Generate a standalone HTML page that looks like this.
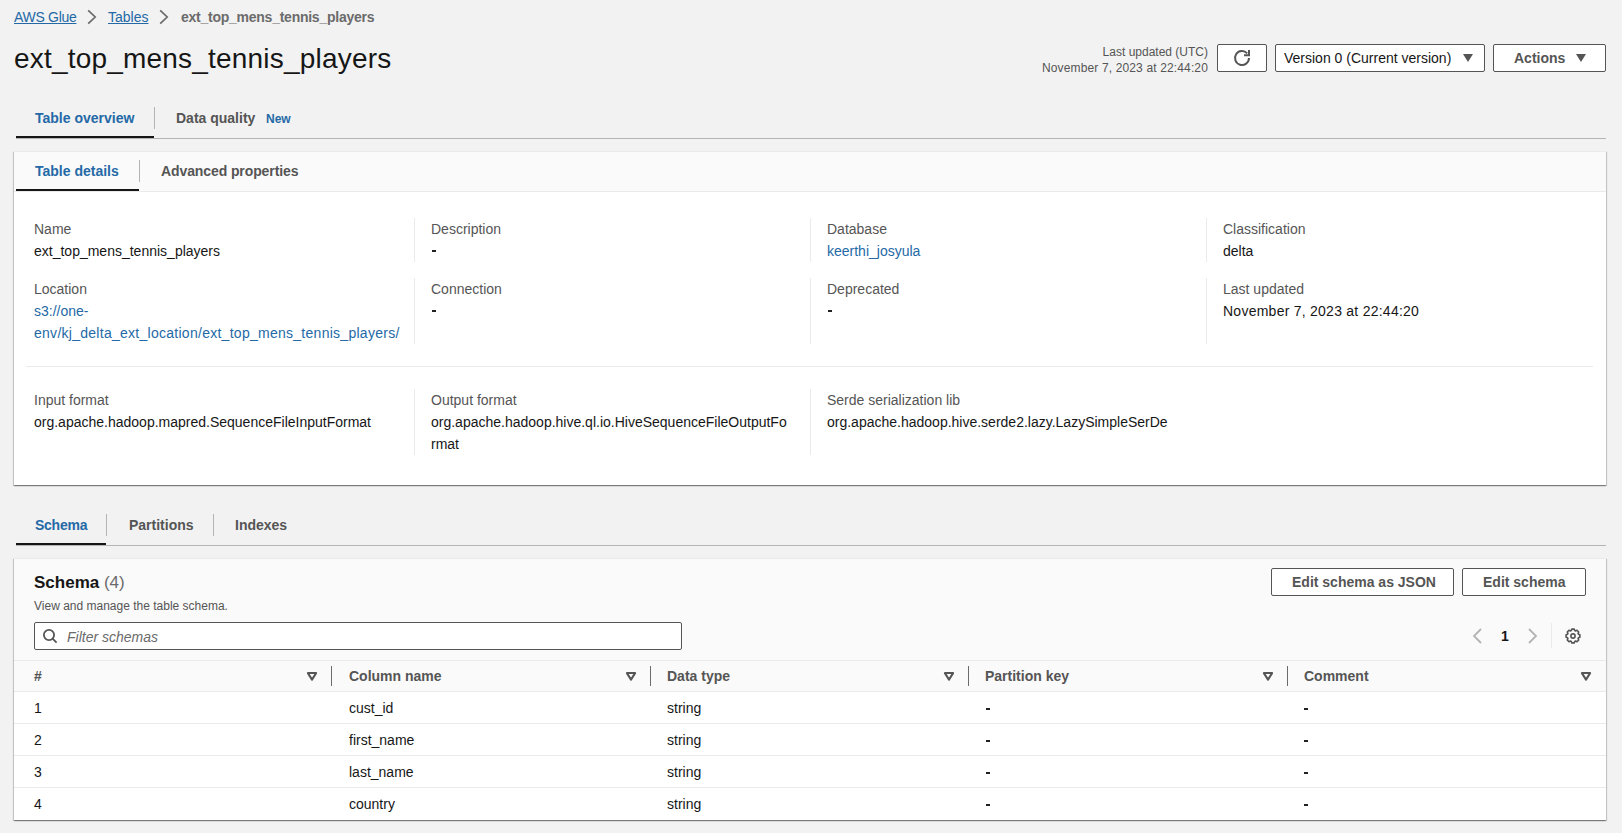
<!DOCTYPE html>
<html><head><meta charset="utf-8">
<style>
*{box-sizing:border-box;margin:0;padding:0}
html,body{width:1622px;height:833px;overflow:hidden;background:#f2f2f2;font-family:"Liberation Sans",sans-serif;color:#161616;position:relative}
.a{position:absolute;white-space:nowrap}
.t14{font-size:14px;line-height:22px}
.t12{font-size:12px;line-height:16px}
.b{font-weight:700}
.lnk{color:#2469a6}
.gray{color:#555555}
.lbl{color:#555555;font-size:14px;line-height:22px}
.val{color:#161616;font-size:14px;line-height:22px}
.vline{position:absolute;width:1px;background:#eaeaea}
.hline{position:absolute;height:1px;background:#eaeaea}
.panel{position:absolute;background:#fff;box-shadow:0 1px 1px 0 rgba(0,0,0,.3),1px 1px 1px 0 rgba(0,0,0,.15),-1px 1px 1px 0 rgba(0,0,0,.15);border-top:1px solid #eaeaea}
.btn{position:absolute;background:#fff;border:1px solid #555555;border-radius:2px}
.tabsep{position:absolute;width:1px;background:#b4b4b4}
</style></head><body>

<!-- breadcrumbs -->
<div class="a t14 lnk" style="left:14px;top:6px;text-decoration:underline;letter-spacing:-0.3px">AWS Glue</div>
<div class="a t14 lnk" style="left:108px;top:6px;text-decoration:underline">Tables</div>
<svg class="a" style="left:86px;top:9px" width="12" height="16" viewBox="0 0 12 16"><path d="M2.2 1.3L9.2 8L2.2 14.7" fill="none" stroke="#6b6b6b" stroke-width="1.7"/></svg>
<svg class="a" style="left:158px;top:9px" width="12" height="16" viewBox="0 0 12 16"><path d="M2.2 1.3L9.2 8L2.2 14.7" fill="none" stroke="#6b6b6b" stroke-width="1.7"/></svg>
<div class="a t14 b" style="left:181px;top:6px;color:#6b6b6b;letter-spacing:-0.25px">ext_top_mens_tennis_players</div>

<!-- title -->
<div class="a" style="left:14px;top:41px;font-size:28px;line-height:36px;letter-spacing:0.2px">ext_top_mens_tennis_players</div>

<!-- last updated -->
<div class="a t12 gray" style="right:414px;top:44px;text-align:right">Last updated (UTC)<br><span style="letter-spacing:0.14px">November 7, 2023 at 22:44:20</span></div>

<!-- refresh -->
<div class="btn" style="left:1217px;top:44px;width:50px;height:28px"></div>
<svg class="a" style="left:1234px;top:50px;overflow:visible" width="16" height="16" viewBox="0 0 16 16"><path d="M15 8A7 7 0 1 1 13.2 3.3" fill="none" stroke="#555555" stroke-width="2"/><path d="M10 5.2h5V0" fill="none" stroke="#555555" stroke-width="2"/></svg>

<!-- version select -->
<div class="btn" style="left:1275px;top:44px;width:210px;height:28px"></div>
<div class="a t14" style="left:1284px;top:47px">Version 0 (Current version)</div>
<svg class="a" style="left:1462px;top:53px" width="12" height="10" viewBox="0 0 12 10"><path d="M1 1h10l-5 8z" fill="#555555"/></svg>

<!-- actions -->
<div class="btn" style="left:1493px;top:44px;width:113px;height:28px"></div>
<div class="a t14 b gray" style="left:1514px;top:47px">Actions</div>
<svg class="a" style="left:1575px;top:53px" width="12" height="10" viewBox="0 0 12 10"><path d="M1 1h10l-5 8z" fill="#555555"/></svg>

<!-- top tabs -->
<div class="a t14 b lnk" style="left:35px;top:107px">Table overview</div>
<div class="tabsep" style="left:154px;top:107px;height:22px"></div>
<div class="a t14 b gray" style="left:176px;top:107px">Data quality</div>
<div class="a t12 b lnk" style="left:266px;top:111px">New</div>
<div class="a" style="left:16px;top:138px;width:1590px;height:1px;background:#b4b4b4"></div>
<div class="a" style="left:16px;top:136px;width:138px;height:2px;background:#161616"></div>


<!-- panel 1 -->
<div class="panel" style="left:14px;top:151px;width:1592px;height:334px">
  <div style="position:absolute;left:0;top:0;width:1592px;height:40px;background:#fafafa;border-bottom:1px solid #eaeaea"></div>
</div>
<div class="a t14 b lnk" style="left:35px;top:160px">Table details</div>
<div class="tabsep" style="left:139px;top:160px;height:22px"></div>
<div class="a t14 b gray" style="left:161px;top:160px;letter-spacing:-0.1px">Advanced properties</div>
<div class="a" style="left:16px;top:189px;width:123px;height:2px;background:#161616"></div>

<!-- details grid -->
<div class="a lbl" style="left:34px;top:218px">Name</div>
<div class="a val" style="left:34px;top:240px">ext_top_mens_tennis_players</div>
<div class="a lbl" style="left:34px;top:278px">Location</div>
<div class="a val" style="color:#2469a6;left:34px;top:300px">s3://one-<br><span style="letter-spacing:0.27px">env/kj_delta_ext_location/ext_top_mens_tennis_players/</span></div>

<div class="vline" style="left:414px;top:218px;height:44px"></div>
<div class="vline" style="left:414px;top:278px;height:66px"></div>
<div class="a lbl" style="left:431px;top:218px">Description</div>
<div class="a" style="left:432px;top:250px;width:4px;height:2px;background:#222"></div>
<div class="a lbl" style="left:431px;top:278px">Connection</div>
<div class="a" style="left:432px;top:310px;width:4px;height:2px;background:#222"></div>

<div class="vline" style="left:810px;top:218px;height:44px"></div>
<div class="vline" style="left:810px;top:278px;height:66px"></div>
<div class="a lbl" style="left:827px;top:218px">Database</div>
<div class="a val" style="color:#2469a6;left:827px;top:240px">keerthi_josyula</div>
<div class="a lbl" style="left:827px;top:278px">Deprecated</div>
<div class="a" style="left:828px;top:310px;width:4px;height:2px;background:#222"></div>

<div class="vline" style="left:1206px;top:218px;height:44px"></div>
<div class="vline" style="left:1206px;top:278px;height:66px"></div>
<div class="a lbl" style="left:1223px;top:218px">Classification</div>
<div class="a val" style="left:1223px;top:240px">delta</div>
<div class="a lbl" style="left:1223px;top:278px">Last updated</div>
<div class="a val" style="left:1223px;top:300px;letter-spacing:0.25px">November 7, 2023 at 22:44:20</div>

<div class="hline" style="left:26px;top:366px;width:1567px"></div>

<div class="a lbl" style="left:34px;top:389px">Input format</div>
<div class="a val" style="left:34px;top:411px">org.apache.hadoop.mapred.SequenceFileInputFormat</div>
<div class="vline" style="left:414px;top:389px;height:66px"></div>
<div class="a lbl" style="left:431px;top:389px">Output format</div>
<div class="a val" style="left:431px;top:411px">org.apache.hadoop.hive.ql.io.HiveSequenceFileOutputFo<br>rmat</div>
<div class="vline" style="left:810px;top:389px;height:66px"></div>
<div class="a lbl" style="left:827px;top:389px">Serde serialization lib</div>
<div class="a val" style="left:827px;top:411px">org.apache.hadoop.hive.serde2.lazy.LazySimpleSerDe</div>

<!-- schema tabs -->
<div class="a t14 b lnk" style="left:35px;top:514px;letter-spacing:-0.25px">Schema</div>
<div class="tabsep" style="left:106px;top:514px;height:22px"></div>
<div class="a t14 b gray" style="left:129px;top:514px">Partitions</div>
<div class="tabsep" style="left:213px;top:514px;height:22px"></div>
<div class="a t14 b gray" style="left:235px;top:514px">Indexes</div>
<div class="a" style="left:16px;top:545px;width:1590px;height:1px;background:#b4b4b4"></div>
<div class="a" style="left:16px;top:543px;width:90px;height:2px;background:#161616"></div>

<!-- panel 2 -->
<div class="panel" style="left:14px;top:558px;width:1592px;height:262px">
  <div style="position:absolute;left:0;top:0;width:1592px;height:133px;background:#fafafa;border-bottom:1px solid #eaeaea"></div>
  <div style="position:absolute;left:0;top:101px;width:1592px;height:1px;background:#eaeaea"></div>
  <div style="position:absolute;left:0;top:164px;width:1592px;height:1px;background:#eaeaea"></div>
  <div style="position:absolute;left:0;top:196px;width:1592px;height:1px;background:#eaeaea"></div>
  <div style="position:absolute;left:0;top:228px;width:1592px;height:1px;background:#eaeaea"></div>
</div>
<div class="a b" style="left:34px;top:572px;font-size:17px;line-height:22px">Schema <span style="font-weight:400;color:#6b6b6b">(4)</span></div>
<div class="a t12 gray" style="left:34px;top:598px">View and manage the table schema.</div>
<div class="btn" style="left:1271px;top:568px;width:183px;height:28px"></div>
<div class="a t14 b gray" style="left:1292px;top:571px">Edit schema as JSON</div>
<div class="btn" style="left:1462px;top:568px;width:124px;height:28px"></div>
<div class="a t14 b gray" style="left:1483px;top:571px">Edit schema</div>

<div class="btn" style="left:34px;top:622px;width:648px;height:28px"></div>
<svg class="a" style="left:42px;top:628px" width="16" height="16" viewBox="0 0 16 16"><circle cx="7" cy="7" r="5.1" fill="none" stroke="#555555" stroke-width="1.8"/><path d="M10.6 10.6l4 4" stroke="#555555" stroke-width="1.8"/></svg>
<div class="a t14" style="left:67px;top:626px;font-style:italic;color:#6b6b6b">Filter schemas</div>

<svg class="a" style="left:1472px;top:628px" width="12" height="16" viewBox="0 0 12 16"><path d="M9 1L2 8l7 7" fill="none" stroke="#b4b4b4" stroke-width="1.8"/></svg>
<div class="a t14 b" style="left:1501px;top:625px">1</div>
<svg class="a" style="left:1526px;top:628px" width="12" height="16" viewBox="0 0 12 16"><path d="M3 1l7 7-7 7" fill="none" stroke="#b4b4b4" stroke-width="1.8"/></svg>
<div class="vline" style="left:1551px;top:623px;height:25px"></div>
<svg class="a" style="left:1565px;top:628px" width="16" height="16" viewBox="0 0 16 16"><path d="M6.24 2.58 L6.78 1.11 L9.22 1.11 L9.76 2.58 L10.59 2.92 L12.02 2.27 L13.73 3.98 L13.08 5.41 L13.42 6.24 L14.89 6.78 L14.89 9.22 L13.42 9.76 L13.08 10.59 L13.73 12.02 L12.02 13.73 L10.59 13.08 L9.76 13.42 L9.22 14.89 L6.78 14.89 L6.24 13.42 L5.41 13.08 L3.98 13.73 L2.27 12.02 L2.92 10.59 L2.58 9.76 L1.11 9.22 L1.11 6.78 L2.58 6.24 L2.92 5.41 L2.27 3.98 L3.98 2.27 L5.41 2.92Z" fill="none" stroke="#555555" stroke-width="1.6" stroke-linejoin="round"/><circle cx="8" cy="8" r="2.1" fill="none" stroke="#555555" stroke-width="1.6"/></svg>

<!-- table header -->
<div class="a t14 b gray" style="left:34px;top:665px">#</div>
<div class="a t14 b gray" style="left:349px;top:665px">Column name</div>
<div class="a t14 b gray" style="left:667px;top:665px">Data type</div>
<div class="a t14 b gray" style="left:985px;top:665px">Partition key</div>
<div class="a t14 b gray" style="left:1304px;top:665px">Comment</div>
<svg class="a" style="left:306px;top:672px" width="12" height="10" viewBox="0 0 12 10"><path d="M1.9 1.1h8.2L6 7.6z" fill="none" stroke="#555555" stroke-width="2" stroke-linejoin="round"/></svg>
<svg class="a" style="left:625px;top:672px" width="12" height="10" viewBox="0 0 12 10"><path d="M1.9 1.1h8.2L6 7.6z" fill="none" stroke="#555555" stroke-width="2" stroke-linejoin="round"/></svg>
<svg class="a" style="left:943px;top:672px" width="12" height="10" viewBox="0 0 12 10"><path d="M1.9 1.1h8.2L6 7.6z" fill="none" stroke="#555555" stroke-width="2" stroke-linejoin="round"/></svg>
<svg class="a" style="left:1262px;top:672px" width="12" height="10" viewBox="0 0 12 10"><path d="M1.9 1.1h8.2L6 7.6z" fill="none" stroke="#555555" stroke-width="2" stroke-linejoin="round"/></svg>
<svg class="a" style="left:1580px;top:672px" width="12" height="10" viewBox="0 0 12 10"><path d="M1.9 1.1h8.2L6 7.6z" fill="none" stroke="#555555" stroke-width="2" stroke-linejoin="round"/></svg>
<div class="a" style="left:331px;top:666px;width:1px;height:20px;background:#6b6b6b"></div>
<div class="a" style="left:650px;top:666px;width:1px;height:20px;background:#6b6b6b"></div>
<div class="a" style="left:968px;top:666px;width:1px;height:20px;background:#6b6b6b"></div>
<div class="a" style="left:1287px;top:666px;width:1px;height:20px;background:#6b6b6b"></div>
<div class="a val" style="left:34px;top:697px">1</div><div class="a val" style="left:349px;top:697px">cust_id</div><div class="a val" style="left:667px;top:697px">string</div><div class="a" style="left:986px;top:708px;width:4px;height:2px;background:#222"></div><div class="a" style="left:1304px;top:708px;width:4px;height:2px;background:#222"></div>
<div class="a val" style="left:34px;top:729px">2</div><div class="a val" style="left:349px;top:729px">first_name</div><div class="a val" style="left:667px;top:729px">string</div><div class="a" style="left:986px;top:740px;width:4px;height:2px;background:#222"></div><div class="a" style="left:1304px;top:740px;width:4px;height:2px;background:#222"></div>
<div class="a val" style="left:34px;top:761px">3</div><div class="a val" style="left:349px;top:761px">last_name</div><div class="a val" style="left:667px;top:761px">string</div><div class="a" style="left:986px;top:772px;width:4px;height:2px;background:#222"></div><div class="a" style="left:1304px;top:772px;width:4px;height:2px;background:#222"></div>
<div class="a val" style="left:34px;top:793px">4</div><div class="a val" style="left:349px;top:793px">country</div><div class="a val" style="left:667px;top:793px">string</div><div class="a" style="left:986px;top:804px;width:4px;height:2px;background:#222"></div><div class="a" style="left:1304px;top:804px;width:4px;height:2px;background:#222"></div>

</body></html>
